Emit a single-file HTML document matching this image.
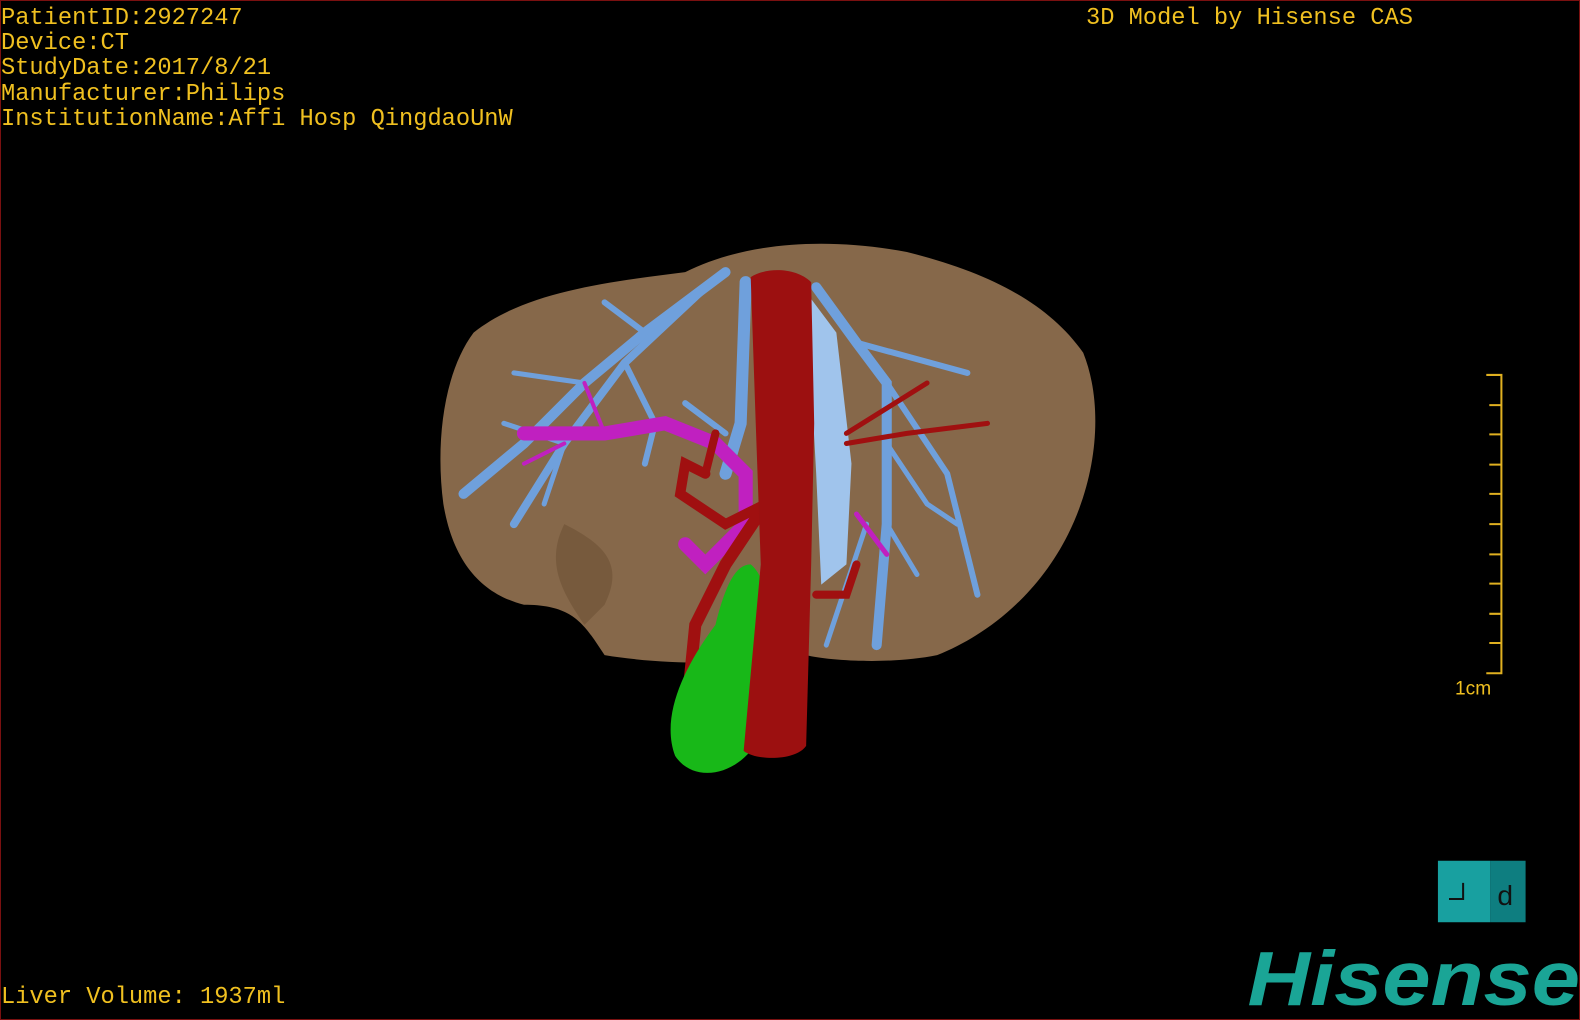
<!DOCTYPE html>
<html><head><style>
html,body{margin:0;padding:0;background:#000;width:1580px;height:1020px;overflow:hidden}
.frame{position:absolute;left:0;top:0;width:1578px;height:1018px;border:1px solid #7a1010}
.t{position:absolute;font-family:"Liberation Mono",monospace;font-size:23.7px;color:#f0c020;line-height:25.2px;white-space:pre}
</style></head><body>
<div class="frame"></div>
<div class="t" style="left:1px;top:6px">PatientID:2927247
Device:CT
StudyDate:2017/8/21
Manufacturer:Philips
InstitutionName:Affi Hosp QingdaoUnW</div>
<div class="t" style="left:1086px;top:6px">3D Model by Hisense CAS</div>
<div class="t" style="left:1px;top:985px">Liver Volume: 1937ml</div>
<svg width="1580" height="1020" viewBox="0 0 1568 1012" preserveAspectRatio="none" style="position:absolute;left:0;top:0">
<!-- liver -->
<path d="M470 330 C520 290 600 280 680 270 C740 240 820 235 900 250 C980 270 1040 300 1075 350 C1095 400 1090 470 1060 530 C1030 590 980 630 930 650 C880 660 820 655 800 650 C740 660 660 660 600 650 C580 620 570 600 520 600 C480 590 450 560 440 500 C432 440 440 370 470 330Z" fill="#86684a"/>
<path d="M560 520 C600 540 620 560 600 600 L580 620 C560 590 540 560 560 520Z" fill="#6e5236" opacity="0.6"/>
<!-- blue veins -->
<g stroke="#6fa0dc" stroke-linecap="round" fill="none">
<path d="M720 270 L640 330 L580 380 L520 440 L460 490" stroke-width="10"/>
<path d="M700 285 L620 360 L560 440 L510 520" stroke-width="8"/>
<path d="M640 330 L600 300" stroke-width="6"/>
<path d="M580 380 L510 370" stroke-width="5"/>
<path d="M560 440 L500 420" stroke-width="5"/>
<path d="M560 440 L540 500" stroke-width="5"/>
<path d="M620 360 L650 420 L640 460" stroke-width="6"/>
<path d="M740 280 L735 420 L720 470" stroke-width="12"/>
<path d="M720 430 L680 400" stroke-width="6"/>
<path d="M810 285 L850 340 L880 380 L880 520 L870 640" stroke-width="10"/>
<path d="M850 340 L960 370" stroke-width="6"/>
<path d="M880 380 L940 470 L970 590" stroke-width="6"/>
<path d="M880 440 L920 500 L950 520" stroke-width="5"/>
<path d="M860 520 L820 640" stroke-width="5"/>
<path d="M880 520 L910 570" stroke-width="5"/>
</g>
<path d="M800 290 L830 330 L845 460 L840 560 L815 580 L810 470Z" fill="#a0c4ec"/>
<!-- magenta portal -->
<g stroke="#c020c0" stroke-linecap="round" fill="none">
<path d="M520 430 L600 430 L660 420 L710 440 L740 470 L740 520 L700 560 L680 540" stroke-width="14"/>
<path d="M580 380 L600 430" stroke-width="4"/>
<path d="M520 460 L560 440" stroke-width="4"/>
<path d="M850 510 L880 550" stroke-width="5"/>
</g>
<!-- red arteries -->
<g stroke="#a01010" stroke-linecap="round" fill="none">
<path d="M760 500 L720 560 L690 620 L680 720" stroke-width="12"/>
<path d="M700 470 L680 460 L675 490 L720 520 L760 500" stroke-width="10"/>
<path d="M710 430 L700 470" stroke-width="8"/>
<path d="M810 590 L840 590 L850 560" stroke-width="8"/>
<path d="M840 440 L900 430 L980 420" stroke-width="5"/>
<path d="M840 430 L920 380" stroke-width="5"/>
<path d="M690 680 L720 690" stroke-width="4"/>
</g>
<!-- gallbladder -->
<path d="M745 560 C770 580 770 660 760 720 C740 770 690 780 670 750 C655 710 680 660 710 620 C720 580 730 560 745 560Z" fill="#18b818"/>
<!-- aorta -->
<path d="M745 275 C760 265 790 265 805 280 L808 420 L805 560 L800 740 C790 755 750 755 738 745 L755 560 L750 420Z" fill="#9c1010"/>
<!-- scale bar -->
<g stroke="#e0b020" stroke-width="2" fill="none">
<path d="M1475 372 H1490 V668 H1475"/>
<path d="M1478 402H1490M1478 431H1490M1478 461H1490M1478 490H1490M1478 520H1490M1478 550H1490M1478 579H1490M1478 609H1490M1478 638H1490"/>
</g>
<text x="1444" y="689" font-family="Liberation Sans,sans-serif" font-size="19" fill="#f0c020">1cm</text>
<!-- logo box -->
<rect x="1427" y="854" width="52" height="61" fill="#18a0a0"/>
<rect x="1479" y="854" width="35" height="61" fill="#0e7e80"/>
<path d="M1452 876 V892 H1438" stroke="#111" stroke-width="2" fill="none"/>
<text x="1486" y="898" font-family="Liberation Sans,sans-serif" font-size="28" fill="#111">d</text>
<text x="1238" y="997" font-family="Liberation Sans,sans-serif" font-size="76" font-weight="bold" font-style="italic" fill="#1aa596" textLength="330" lengthAdjust="spacingAndGlyphs">Hisense</text>
</svg>
</body></html>
